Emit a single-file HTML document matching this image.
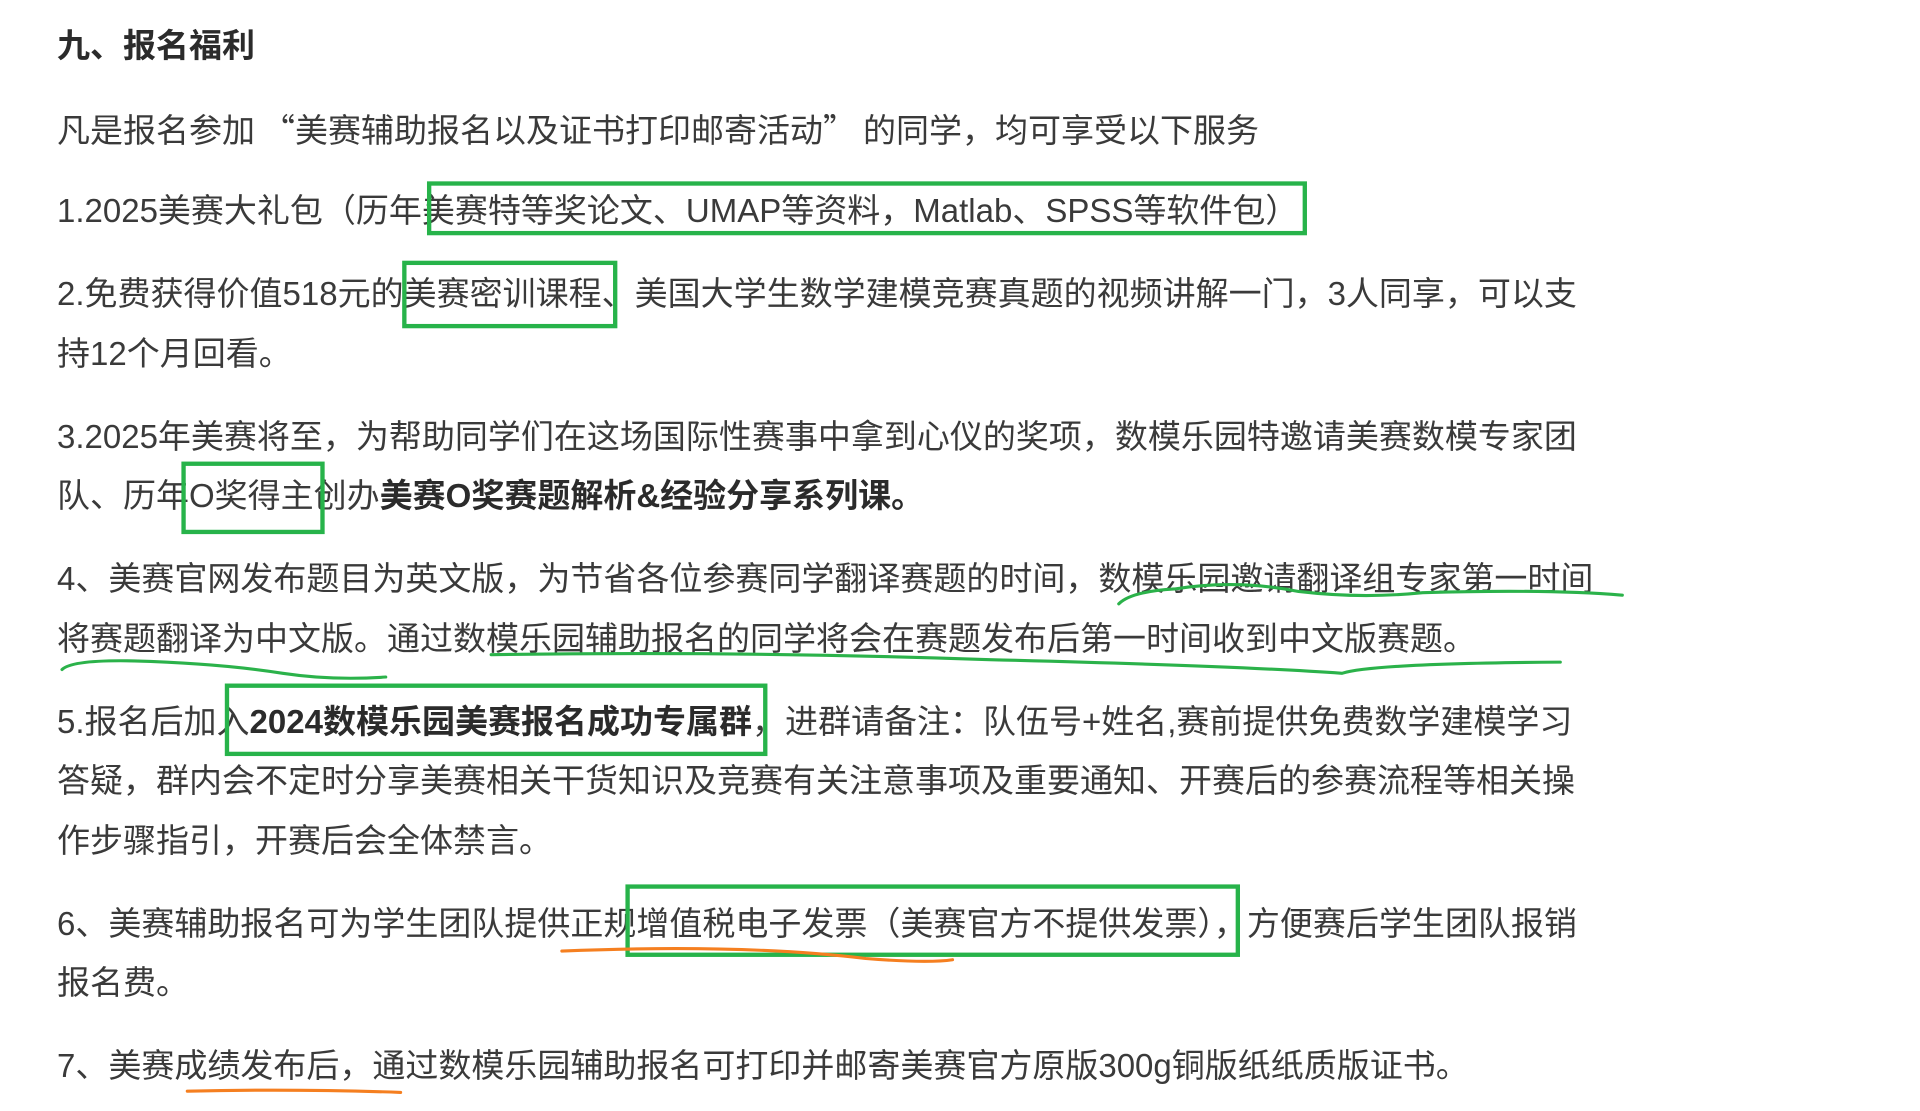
<!DOCTYPE html>
<html><head><meta charset="utf-8"><style>
html,body{margin:0;padding:0;background:#fff;width:1920px;height:1111px;overflow:hidden;position:relative}
.l{position:absolute;left:57px;white-space:nowrap;font-family:"Liberation Sans","Noto Sans CJK SC",sans-serif;font-size:33px;line-height:60px;color:#3a3a3a}
.q{font-family:"Noto Sans CJK SC",sans-serif;display:inline-block;width:40px;text-align:center}
b{font-weight:bold;color:#2b2b2b}
svg{position:absolute;left:0;top:0}
</style></head><body>
<div class="l" style="top:16px"><b>九、报名福利</b></div>
<div class="l" style="top:98px">凡是报名参加<span class="q" style="text-align:right">“</span>美赛辅助报名以及证书打印邮寄活动<span class="q" style="text-align:left">”</span>的同学，均可享受以下服务</div>
<div class="l" style="top:181px">1.2025美赛大礼包（历年美赛特等奖论文、UMAP等资料，Matlab、SPSS等软件包）</div>
<div class="l" style="top:264px">2.免费获得价值518元的美赛密训课程、美国大学生数学建模竞赛真题的视频讲解一门，3人同享，可以支</div>
<div class="l" style="top:324px">持12个月回看。</div>
<div class="l" style="top:407px">3.2025年美赛将至，为帮助同学们在这场国际性赛事中拿到心仪的奖项，数模乐园特邀请美赛数模专家团</div>
<div class="l" style="top:466px">队、历年O奖得主创办<b>美赛O奖赛题解析&amp;经验分享系列课。</b></div>
<div class="l" style="top:549px">4、美赛官网发布题目为英文版，为节省各位参赛同学翻译赛题的时间，数模乐园邀请翻译组专家第一时间</div>
<div class="l" style="top:609px">将赛题翻译为中文版。通过数模乐园辅助报名的同学将会在赛题发布后第一时间收到中文版赛题。</div>
<div class="l" style="top:692px">5.报名后加入<b>2024数模乐园美赛报名成功专属群</b>，进群请备注：队伍号+姓名,赛前提供免费数学建模学习</div>
<div class="l" style="top:751px">答疑，群内会不定时分享美赛相关干货知识及竞赛有关注意事项及重要通知、开赛后的参赛流程等相关操</div>
<div class="l" style="top:811px">作步骤指引，开赛后会全体禁言。</div>
<div class="l" style="top:894px">6、美赛辅助报名可为学生团队提供正规增值税电子发票（美赛官方不提供发票），方便赛后学生团队报销</div>
<div class="l" style="top:953px">报名费。</div>
<div class="l" style="top:1036px">7、美赛成绩发布后，通过数模乐园辅助报名可打印并邮寄美赛官方原版300g铜版纸纸质版证书。</div>
<svg width="1920" height="1111" viewBox="0 0 1548 896" preserveAspectRatio="none">
<g fill="none" stroke="#27b34a" stroke-width="3.5">
<rect x="346" y="148" width="706" height="40"/>
<rect x="326" y="212" width="170" height="51"/>
<rect x="148" y="374" width="112" height="55"/>
<rect x="183" y="553" width="434" height="55"/>
<rect x="506" y="715" width="492" height="55"/>
</g>
<g fill="none" stroke="#2bb24a" stroke-width="2.5" stroke-linecap="round">
<path d="M902 487 Q912 477 947 475 Q997 467 1047 477 Q1097 483 1147 478 Q1247 475 1308 480"/>
<path d="M50 540 Q58 532 108 533 Q178 535 228 543 Q268 549 311 546"/>
<path d="M396 528 Q598 525 798 532 Q998 537 1082 543 Q1107 535 1258 534"/>
</g>
<g fill="none" stroke="#f57f20" stroke-width="2.5" stroke-linecap="round">
<path d="M453 767 Q598 761 698 773 Q748 777 768 774"/>
<path d="M151 880 Q239 878 323 881"/>
</g>
</svg>
</body></html>
